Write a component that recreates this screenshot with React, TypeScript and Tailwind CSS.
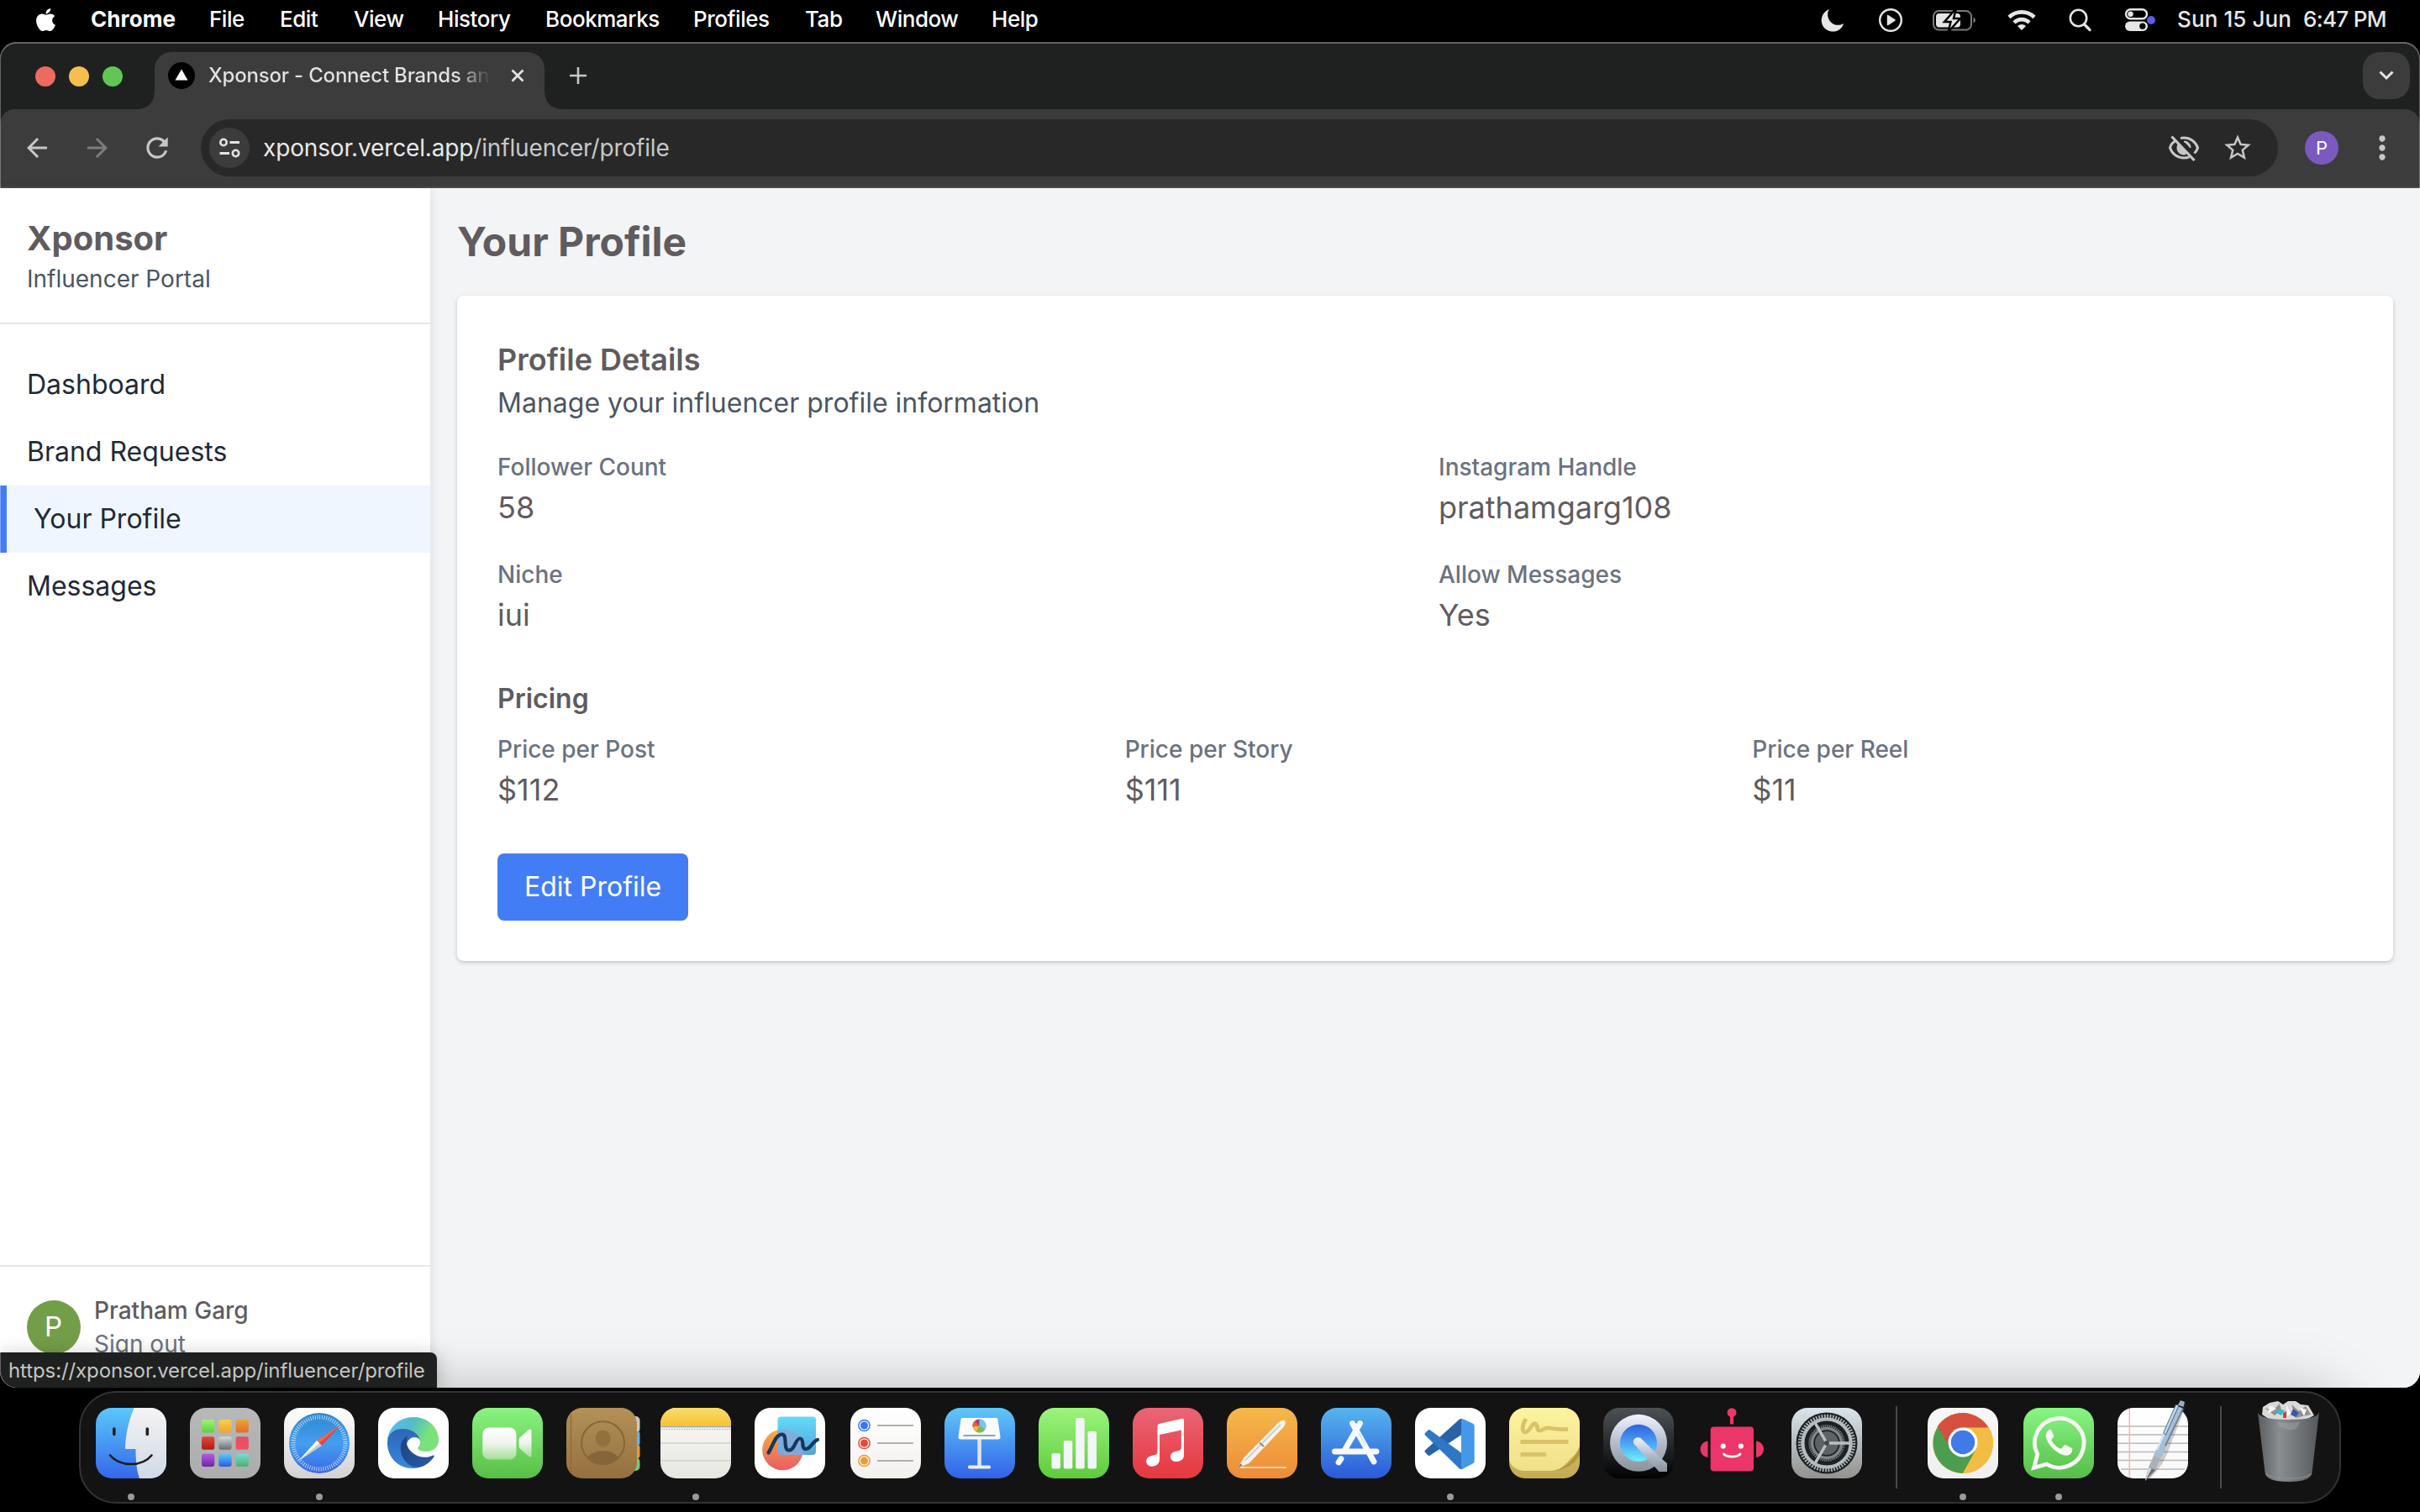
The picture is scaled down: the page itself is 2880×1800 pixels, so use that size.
import React from "react";
import { FaApple } from "react-icons/fa";
import { MdRefresh, MdStarBorder, MdMoreVert, MdArrowBack, MdArrowForward } from "react-icons/md";

/* ---------- Menu bar ---------- */

const menus: [string, string][] = [
  ["Chrome", "w-[141px] font-bold tracking-[0.1px]"],
  ["File", "w-[84px]"],
  ["Edit", "w-[88px]"],
  ["View", "w-[100px]"],
  ["History", "w-[128px]"],
  ["Bookmarks", "w-[176px]"],
  ["Profiles", "w-[133px]"],
  ["Tab", "w-[84px]"],
  ["Window", "w-[138px]"],
  ["Help", "w-[90px]"],
];

function StatusIcons() {
  return (
    <svg width="400" height="50" viewBox="2165 0 400 50" className="shrink-0">
      <path d="M2177 11c-12 5-12 20-2 25 8 4 17 0 19-8-7 4-14 1-17-4-3-6-2-10 0-13z" fill="#e6e6e6" />
      <circle cx="2250" cy="24" r="12.8" fill="none" stroke="#e6e6e6" strokeWidth="2.4" />
      <path d="M2246.500 18.500v11l8.500-5.500z" fill="#e6e6e6" stroke="#e6e6e6" strokeWidth="1.500" strokeLinejoin="round" />
      <rect x="2301" y="13" width="45" height="22.500" rx="6.500" fill="none" stroke="#7b7b7b" strokeWidth="2" />
      <path d="M2348.500 20.500q2.500 1 2.500 3.500t-2.500 3.500z" fill="#7b7b7b" />
      <rect x="2304" y="16" width="29" height="16.500" rx="4" fill="#e6e6e6" />
      <path d="M2328 10l-14 16h7.500l-3 12 14.500-16h-8z" fill="#e6e6e6" stroke="#000" strokeWidth="2.500" />
      <g fill="none" stroke="#e6e6e6" strokeWidth="4.600">
        <path d="M2391 20.500a21.500 21.500 0 0 1 30 0" />
        <path d="M2397 27a12.500 12.500 0 0 1 18 0" />
      </g>
      <path d="M2406 36l-5-5a7 7 0 0 1 10 0z" fill="#e6e6e6" />
      <circle cx="2473.500" cy="21.500" r="9.700" fill="none" stroke="#e6e6e6" strokeWidth="2.600" />
      <path d="M2480.500 29l6.500 6.500" stroke="#e6e6e6" strokeWidth="3.200" strokeLinecap="round" />
      <rect x="2530" y="11.200" width="25" height="11" rx="5.500" fill="none" stroke="#e6e6e6" strokeWidth="2.400" />
      <circle cx="2535.500" cy="16.700" r="3.200" fill="#e6e6e6" />
      <rect x="2529" y="25.500" width="27" height="11.500" rx="5.700" fill="#e6e6e6" />
      <circle cx="2549.800" cy="31.200" r="3.600" fill="#000" />
      <circle cx="2560" cy="24" r="4.900" fill="#5e5ce6" />
    </svg>
  );
}

function MenuBar() {
  return (
    <div className="flex h-[50px] shrink-0 items-center bg-black pl-[39px] text-[26px] leading-[46px] text-white">
      <FaApple className="mb-1 mr-[38px] size-[31px] shrink-0" />
      <div className="flex flex-1 pb-1 font-medium tracking-[-0.45px]">
        {menus.map(([label, cls]) => (
          <span key={label} className={`shrink-0 whitespace-nowrap ${cls}`}>
            {label}
          </span>
        ))}
      </div>
      <StatusIcons />
      <div className="flex w-[315px] gap-3.5 pb-1 pl-[26px] whitespace-nowrap font-medium text-[#e8e8e8]">
        <span className="tracking-[0.1px]">Sun 15 Jun</span>
        <span className="tracking-[-0.7px]">6:47 PM</span>
      </div>
    </div>
  );
}

/* ---------- Browser chrome ---------- */

function TabStrip() {
  return (
    <div className="flex h-[80px] items-start bg-[#1f2120] pl-[42px] pt-[12px]">
      <div className="flex h-[58px] w-[142px] items-center gap-4">
        <span className="size-6 rounded-full bg-[#ed6a5f]" />
        <span className="size-6 rounded-full bg-[#f5bf4f]" />
        <span className="size-6 rounded-full bg-[#62c655]" />
      </div>
      <div className="relative flex h-[68px] w-[464px] rounded-t-[20px] bg-[#3c3c3c] pl-[16px]">
        <svg className="absolute -left-[22px] bottom-0" width="22" height="22">
          <path d="M22 0v22H0C14 22 22 14 22 0z" fill="#3c3c3c" />
        </svg>
        <svg className="absolute -right-[22px] bottom-0" width="22" height="22">
          <path d="M0 0v22h22C8 22 0 14 0 0z" fill="#3c3c3c" />
        </svg>
        <div className="flex h-[56px] items-center">
          <svg width="32" height="32" viewBox="0 0 32 32">
            <circle cx="16" cy="16" r="16" fill="#000" />
            <path d="M16 8.500l7.500 13h-15z" fill="#fff" />
          </svg>
          <span className="ml-[16px] w-[336px] overflow-hidden whitespace-nowrap bg-linear-to-r from-[#e3e3e3] from-88% to-[#3c3c3c] to-100% bg-clip-text text-[24px] font-medium tracking-[-0.2px] text-transparent">
            Xponsor - Connect Brands an
          </span>
          <svg className="ml-[24px]" width="16" height="16" viewBox="0 0 16 16">
            <path d="M1.500 1.500l13 13M14.500 1.500l-13 13" stroke="#e3e3e3" strokeWidth="2.800" />
          </svg>
        </div>
      </div>
      <svg className="ml-[30px] mt-[18px]" width="20" height="20" viewBox="0 0 20 20">
        <path d="M10 0v20M0 10h20" stroke="#c7c7c7" strokeWidth="2.600" />
      </svg>
      <div className="ml-auto mr-[12px] flex h-[56px] w-[56px] items-center justify-center rounded-[20px] bg-[#3c3c3c]">
        <svg width="18" height="12" viewBox="0 0 18 12">
          <path d="M1.500 1.500L9 9l7.500-7.500" fill="none" stroke="#e3e3e3" strokeWidth="3" />
        </svg>
      </div>
    </div>
  );
}

function Toolbar() {
  return (
    <div className="bg-[#1f2120]">
      <div className="flex h-[94px] items-center rounded-t-[18px] border-b-2 border-[#4a4a4a] bg-[#3c3c3c] pl-[28px]">
        <MdArrowBack className="size-9 -ml-0.5 text-[#c7c7c7]" />
        <MdArrowForward className="ml-[36px] size-9 text-[#7d7d7d]" />
        <MdRefresh className="ml-[34px] size-[38px] text-[#c7c7c7]" />
        <div className="ml-[33px] flex h-[68px] w-[2472px] items-center rounded-full bg-[#282828] pl-[10px] pr-[29px]">
          <div className="flex size-12 items-center justify-center rounded-full bg-[#3c3c3c]">
            <svg width="28" height="28" viewBox="0 0 28 28" fill="none" stroke="#e3e3e3" strokeWidth="2.600">
              <circle cx="7" cy="7.500" r="3.700" />
              <path d="M14.500 7.500H26M2.500 20.500H14" strokeWidth="3" />
              <circle cx="21.500" cy="20.500" r="3.700" />
            </svg>
          </div>
          <div className="ml-[16px] flex-1 whitespace-nowrap text-[28px] tracking-[-0.15px] text-[#c7c7c7]">
            <span className="text-[#e8e8e8]">xponsor.vercel.app</span>/influencer/profile
          </div>
          <svg width="40" height="40" viewBox="0 0 40 40" fill="none" stroke="#c7c7c7">
            <path d="M10 11.500C6 14 4 17.500 3.500 20 6 27.500 12.500 32 20 32c2.500 0 4.500-.4 6.500-1.200M16 8.600c1.300-.4 2.700-.6 4-.6 7.500 0 14 4.500 16.500 12-.8 2.500-2 4.500-4 6.500" strokeWidth="3" />
            <path d="M20 12.500c4.500 0 7.500 3.200 7.500 7.500M13 17c-2 6 2 10.500 7 10.500z" strokeWidth="2" fill="#c7c7c7" />
            <path d="M15 15.500l10 11c-3 2-8 2-10.500-1-2.500-3-1.500-7 .5-10z" fill="#c7c7c7" stroke="none" />
            <path d="M5.500 6.500l27 28.500" strokeWidth="3.200" />
            <path d="M8 4.500l27 28.500" stroke="#282828" strokeWidth="2" />
          </svg>
          <MdStarBorder className="ml-[25px] size-[38px] text-[#c7c7c7]" />
        </div>
        <div className="ml-[32px] flex size-[40px] items-center justify-center rounded-full bg-[#7a5abf] text-[22px] text-white">
          P
        </div>
        <MdMoreVert className="ml-[30px] size-[44px] text-[#c7c7c7]" />
      </div>
    </div>
  );
}

/* ---------- Page ---------- */

const navItems = ["Dashboard", "Brand Requests", "Your Profile", "Messages"];

function Sidebar() {
  return (
    <aside className="relative z-10 flex w-[512px] shrink-0 flex-col bg-white shadow-[0_2px_12px_rgba(0,0,0,0.1)]">
      <div className="border-b-2 border-gray-200 p-8">
        <h1 className="text-[40px] leading-[56px] font-bold text-[#605b5f]">Xponsor</h1>
        <p className="text-[28px] leading-[40px] text-[#4b5563]">Influencer Portal</p>
      </div>
      <nav className="mt-8 flex-1">
        {navItems.map((item) => (
          <div
            key={item}
            className={
              item === "Your Profile"
                ? "flex h-20 items-center border-l-8 border-[#437df6] bg-[#eff6ff] px-8 text-[32px] text-[#1f2937]"
                : "flex h-20 items-center px-8 text-[32px] text-[#1f2937]"
            }
          >
            {item}
          </div>
        ))}
      </nav>
      <div className="flex items-center gap-4 border-t-2 border-gray-200 p-8">
        <div className="flex size-16 items-center justify-center rounded-full bg-[#739e48] pr-px text-[33px] text-white">P</div>
        <div className="text-[28px] leading-[40px]">
          <p className="font-medium text-[#605b5f]">Pratham Garg</p>
          <p className="text-[#6b7280]">Sign out</p>
        </div>
      </div>
    </aside>
  );
}

function Field({ label, value }: { label: string; value: string }) {
  return (
    <div>
      <p className="text-[28px] leading-[40px] font-medium text-[#6b7280]">{label}</p>
      <p className="text-[36px] leading-[56px] text-[#605b5f]">{value}</p>
    </div>
  );
}

function Main() {
  return (
    <main className="flex-1 bg-[#f3f4f6] p-8">
      <h2 className="mb-8 text-[48px] leading-[64px] font-bold text-[#605b5f]">Your Profile</h2>
      <section className="rounded-lg bg-white p-12 shadow-[0_2px_6px_rgba(0,0,0,0.1),0_2px_4px_rgba(0,0,0,0.1)]">
        <h3 className="text-[36px] leading-[56px] font-semibold text-[#605b5f]">Profile Details</h3>
        <p className="text-[32px] leading-[48px] text-[#4b5563]">Manage your influencer profile information</p>
        <div className="mt-8 grid grid-cols-2 gap-8">
          <Field label="Follower Count" value="58" />
          <Field label="Instagram Handle" value="prathamgarg108" />
          <Field label="Niche" value="iui" />
          <Field label="Allow Messages" value="Yes" />
        </div>
        <h4 className="mt-12 mb-4 text-[32px] leading-[48px] font-semibold text-[#605b5f]">Pricing</h4>
        <div className="grid grid-cols-3 gap-8">
          <Field label="Price per Post" value="$112" />
          <Field label="Price per Story" value="$111" />
          <Field label="Price per Reel" value="$11" />
        </div>
        <button className="mt-12 block h-20 rounded-lg bg-[#437df6] px-8 text-[32px] text-white">Edit Profile</button>
      </section>
    </main>
  );
}

/* ---------- Dock icons ---------- */

function Grad({ id, a, b, mid }: { id: string; a: string; b: string; mid?: string }) {
  return (
    <linearGradient id={id} x1="0" y1="0" x2="0" y2="1">
      <stop offset="0" stopColor={a} />
      {mid && <stop offset="0.5" stopColor={mid} />}
      <stop offset="1" stopColor={b} />
    </linearGradient>
  );
}

function Tile({ id, a, b, children }: { id: string; a: string; b: string; children?: React.ReactNode }) {
  return (
    <svg width="84" height="84" viewBox="0 0 84 84" className="overflow-visible">
      <defs>
        <Grad id={id} a={a} b={b} />
        <clipPath id={`${id}-clip`}>
          <rect width="84" height="84" rx="19" />
        </clipPath>
      </defs>
      <rect width="84" height="84" rx="19" fill={`url(#${id})`} />
      {children}
    </svg>
  );
}

const Finder = () => (
  <Tile id="finder" a="#5ac8fa" b="#3567eb">
    <defs>
      <Grad id="finder-face" a="#f4f2f4" b="#d0dae6" />
    </defs>
    <path d="M45.500 0C38 18 35.500 34 35 47.500q0 1.500 1.500 1.500h11c0 14 1 25 4.500 35H100V0z" fill="url(#finder-face)" clipPath="url(#finder-clip)" />
    <path d="M21.800 25v6.500M61.300 25v6.500" stroke="#222" strokeWidth="3.600" strokeLinecap="round" />
    <path d="M17 56.500c12 14 38 14 49.500 0" fill="none" stroke="#1b1b1b" strokeWidth="2.600" strokeLinecap="round" />
  </Tile>
);

const padColors: [string, string][] = [
  ["#9df573", "#5cd03f"], ["#f8d24a", "#f0a32f"], ["#f0a236", "#dc6f2c"],
  ["#ea4639", "#a91d14"], ["#d3dbe0", "#6a6d70"], ["#e94a68", "#ec5560"],
  ["#b65ee8", "#6a27a4"], ["#58ccf9", "#2a5be8"], ["#7bdcd5", "#4bb073"],
];

const Launchpad = () => (
  <Tile id="pad" a="#b7b8b9" b="#acacac">
    <defs>
      {padColors.map(([a, b], i) => (
        <Grad key={i} id={`pad${i}`} a={a} b={b} />
      ))}
    </defs>
    {padColors.map((_, i) => (
      <rect key={i} x={14 + (i % 3) * 20.3} y={14 + Math.floor(i / 3) * 20.2} width="15.300" height="15.500" rx="2.800" fill={`url(#pad${i})`} />
    ))}
  </Tile>
);

const Safari = () => (
  <Tile id="safari" a="#ffffff" b="#d2d2d2">
    <defs>
      <Grad id="safari-dial" a="#2e87cd" mid="#459ef0" b="#3969e6" />
    </defs>
    <circle cx="42" cy="42" r="36" fill="url(#safari-dial)" />
    <circle cx="42" cy="42" r="31" fill="none" stroke="#dcecff" strokeWidth="5" strokeDasharray="0.900 1.805" opacity="0.85" />
    <path d="M67.500 20L45 45l-6-6z" fill="#e0483c" />
    <path d="M67.500 20L42 42l-3-3z" fill="#ef6a5c" />
    <path d="M17 63.500L39 39l6 6z" fill="#c9ccd0" />
    <path d="M17 63.500L39 39l3 3z" fill="#fff" />
  </Tile>
);

const Edge = () => (
  <Tile id="edge" a="#ffffff" b="#ffffff">
    <defs>
      <linearGradient id="edge-top" x1="0" y1="0" x2="1" y2="0.400">
        <stop offset="0.150" stopColor="#5cb8ee" />
        <stop offset="0.500" stopColor="#53bbc4" />
        <stop offset="0.850" stopColor="#7be27a" />
      </linearGradient>
      <Grad id="edge-mid" a="#2a68b5" b="#3a86dc" />
      <linearGradient id="edge-low" x1="0" y1="0" x2="1" y2="1">
        <stop offset="0" stopColor="#1d427f" />
        <stop offset="1" stopColor="#2a5ba8" />
      </linearGradient>
    </defs>
    <path d="M11 40C12 23 25 11 42 11c18 0 30 13 30 27 0 9-6 14-15 14-6 0-11-2-9.500-5 2-2 2.500-4 2.500-6-1-9-10-15-21-15-9 0-16 6-18 14z" fill="url(#edge-top)" />
    <path d="M11 42c0-11 8-17 18-17 11 0 19 6 21 13-5-6-15-3-16 6-1 12 8 20 16 26.500-3 1-6 1.500-9 1.500C24 72 11 59 11 42z" fill="url(#edge-mid)" />
    <path d="M35 33.500C26 38 25 50 29 58c4 9 12 14 21 12.500 8-2 14-8 16.500-12.500.6-1.400-.4-2-1.500-1.200-7 3.200-15 2.700-22-1.800-8-5.500-11-12.500-8-21.500z" fill="url(#edge-low)" />
  </Tile>
);

const FaceTime = () => (
  <Tile id="ft" a="#89f380" b="#58bf45">
    <defs>
      <Grad id="ft-cam" a="#ffffff" mid="#eef5ec" b="#a4dd98" />
    </defs>
    <rect x="12.200" y="23.500" width="40.300" height="38" rx="8" fill="url(#ft-cam)" />
    <path d="M55.500 39c0-2 .6-3 2-4.200l9.500-8.500c2-1.500 3.500-1 3.500 1.200v29c0 2.200-1.500 2.700-3.500 1.200l-9.500-8.500c-1.400-1.200-2-2.200-2-4.200z" fill="url(#ft-cam)" />
  </Tile>
);

const Contacts = () => (
  <svg width="84" height="84" viewBox="0 0 84 84" className="overflow-visible">
    <defs>
      <Grad id="ct" a="#b39158" b="#95703f" />
    </defs>
    <rect x="70" y="10" width="17.500" height="20" rx="5" fill="#c9c9c9" />
    <rect x="70" y="28" width="17.500" height="17" rx="3" fill="#5db5ef" />
    <rect x="70" y="44" width="17.500" height="16" rx="3" fill="#f0953a" />
    <rect x="70" y="59" width="17.500" height="16" rx="5" fill="#69d267" />
    <rect width="84" height="84" rx="19" fill="url(#ct)" />
    <path d="M5.500 7v70" stroke="#8a6a3b" strokeWidth="1.200" />
    <circle cx="43.600" cy="41.700" r="25.500" fill="none" stroke="#876738" strokeWidth="2" />
    <ellipse cx="43.600" cy="36.500" rx="9" ry="10" fill="#92713f" />
    <path d="M25.500 59.500c5-11 31-11 36 0a25.500 25.500 0 0 1-36 0z" fill="#86653a" />
  </svg>
);

const Notes = () => (
  <Tile id="notes" a="#fbfaf8" b="#e6e6e0">
    <defs>
      <Grad id="notes-top" a="#fbdc6a" b="#f5c335" />
    </defs>
    <g clipPath="url(#notes-clip)">
      <rect width="84" height="21.500" fill="url(#notes-top)" />
      <rect y="21.500" width="84" height="1.800" fill="#a9a8a6" />
      <path d="M1 25.500h83" stroke="#b5b4b1" strokeWidth="1.400" strokeDasharray="1.400 1.600" />
      <path d="M0 42h84M0 63h84" stroke="#d0d0cf" strokeWidth="1.600" />
    </g>
  </Tile>
);

const Freeform = () => (
  <Tile id="ff" a="#ffffff" b="#ffffff">
    <defs>
      <Grad id="ff-c" a="#f2b33d" mid="#ee8452" b="#ea5d68" />
      <Grad id="ff-s" a="#62dbf9" b="#55a4d8" />
    </defs>
    <circle cx="33.500" cy="50" r="24.300" fill="url(#ff-c)" />
    <rect x="27.500" y="10.500" width="45.500" height="45.500" rx="4" fill="url(#ff-s)" />
    <path d="M27.500 26.500a24.300 24.300 0 0 1 30.300 29.500H31.500q-4 0-4-4z" fill="#8aa9dc" opacity="0.800" />
    <path d="M16.500 53.500C22 45 25 31.500 32.500 31.500 40 31.500 33 50.500 41 50.500c7 0 7.500-14 13-14 6 0 .5 12.500 7 12.500 5.500 0 8-9 14-11" fill="none" stroke="#16375c" strokeWidth="4.200" strokeLinecap="round" />
  </Tile>
);

const Reminders = () => (
  <Tile id="rem" a="#ffffff" b="#f3f1ee">
    {["#3478f6", "#e5493a", "#ec9a35"].map((c, i) => (
      <g key={c}>
        <circle cx="16.500" cy={21 + i * 21} r="6.600" fill="none" stroke={c} strokeWidth="1.500" />
        <circle cx="16.500" cy={21 + i * 21} r="4.500" fill={c} />
        <path d={`M32 ${21 + i * 21}h43`} stroke="#b0b0b2" strokeWidth="1.800" />
      </g>
    ))}
  </Tile>
);

const Keynote = () => (
  <Tile id="key" a="#60c7f8" b="#3162e8">
    <rect x="39.300" y="36" width="4.600" height="34" fill="#dfe3ea" />
    <rect x="28" y="68.500" width="27" height="4" rx="1.800" fill="#eceef2" />
    <path d="M21.500 12h40q1.800 0 2 2l3 20.500q.3 3-2.500 3H19q-2.800 0-2.500-3l3-20.500q.2-2 2-2z" fill="#fafbfd" />
    <path d="M22.500 33h38" stroke="#8fa3bd" strokeWidth="2.200" />
    <circle cx="41.500" cy="21.500" r="8" fill="#f4b93f" />
    <path d="M41.500 21.500v-8a8 8 0 0 1 7 12z" fill="#6cc8f4" />
    <path d="M41.500 21.500l7 4a8 8 0 0 1-11 3z" fill="#79bf4f" />
    <path d="M41.500 21.500l-8 1a8 8 0 0 1 8-9z" fill="#b03a75" />
    <path d="M41.500 21.500l-8 .5a8 8 0 0 1 2-6z" fill="#e8604a" />
  </Tile>
);

const Numbers = () => (
  <Tile id="num" a="#9cf47c" b="#5dcc3c">
    <g fill="#f3f5f6">
      <rect x="15.500" y="54" width="10.500" height="18.500" rx="2" />
      <rect x="29.800" y="39" width="10.500" height="33.500" rx="2" />
      <rect x="44.200" y="12" width="10.500" height="60.500" rx="2" />
      <rect x="58.500" y="28" width="10.500" height="44.500" rx="2" />
    </g>
  </Tile>
);

const Music = () => (
  <Tile id="mus" a="#ea6576" b="#e6373f">
    <path d="M29.500 21.500q0-2 2-2.500L59 12.800q2-.4 2 1.500v42c0 5-4 7.700-9 7.700-4 0-7-2-7-5.800 0-4.200 3.500-6 7.500-6.700 3.500-.7 5.300-1.500 5.300-4V26.500L32 32v28.500c0 6-3.700 9.200-9 9.200-4 0-6.800-2.200-6.800-6s3-6 7-6.900c4.300-.9 6.300-1.500 6.300-4.300z" fill="#fff" />
  </Tile>
);

const Pages = () => (
  <Tile id="pages" a="#f5b84a" b="#ee8b39">
    <path d="M16 71h55" stroke="#fbd3a0" strokeWidth="2.200" />
    <path d="M13.500 71.500L20 59.500 62 17q5-3.500 7-1.500t-1.500 7.500L26.500 66z" fill="#f4f2f0" />
    <path d="M22 62.500L64 20" stroke="#c9c4c0" strokeWidth="1.400" />
    <path d="M39 41.500l5 4.500" stroke="#8f8a86" strokeWidth="2" />
    <path d="M13.500 71.500l3-5 2 2z" fill="#6f6a68" />
  </Tile>
);

const AppStore = () => (
  <Tile id="aps" a="#55b6ee" b="#2c59d8">
    <g stroke="#f7f9fc" strokeWidth="6.800" strokeLinecap="round">
      <path d="M16.500 52h49.500M24 60.500l-3 4.500M37.500 18.500L63 64M46.500 18.500L28.500 50" />
    </g>
    <path d="M45 30l8 15" stroke="#c8dcf5" strokeWidth="1.200" />
  </Tile>
);

const VSCode = () => (
  <Tile id="vsc" a="#ffffff" b="#ffffff">
    <path d="M53 13.500q1.500-1 4 0v17.500L18 56.500q-1.200 1-2.400 0l-3.600-3.400q-1.200-1.400 0-2.600z" fill="#2863a8" />
    <path d="M12 32.500q-1.200-1.400 0-2.600l3.600-3.400q1.200-1 2.400 0L57 55v17.500q-2.500 1-4 0z" fill="#2f77c6" />
    <path d="M55 13q1-.4 2 .2l12 5.600q1.700 1 1.700 3v41.500q0 2-1.700 3L57 72.400q-1 .6-2 .2z" fill="#4598e8" />
  </Tile>
);

const Stickies = () => (
  <Tile id="stk" a="#d9c66a" b="#c4ab53">
    <defs>
      <Grad id="stk-p" a="#fdf3a0" b="#f0e08a" />
    </defs>
    <path d="M0 60V19A19 19 0 0 1 19 0h46a19 19 0 0 1 19 19v26c-2 9-8 12-14 19-6 6-10 11-20 11H19C8 75 0 68 0 60z" fill="url(#stk-p)" />
    <path d="M84 46c-6 15-18 28-34 29 14 0 30-8 34-20z" fill="#a58a3a" opacity="0.700" />
    <g fill="none" stroke="#d9c368" strokeWidth="4.800">
      <path d="M20 13c-5 8-5 16-1 16 6 0 8-12 12-10s1 9 6 8 5-4 11-3 8 2 22 1.500M13.500 40.500h57M13.500 55.500H44" />
    </g>
  </Tile>
);

const QuickTime = () => (
  <Tile id="qt" a="#4d5156" b="#020203">
    <defs>
      <Grad id="qt-ring" a="#f0f4ff" mid="#b4bccb" b="#8b929b" />
      <Grad id="qt-in" a="#2f62e0" mid="#4ba1f4" b="#6df0fb" />
    </defs>
    <circle cx="42" cy="41.800" r="34" fill="url(#qt-ring)" />
    <circle cx="42" cy="41.800" r="22" fill="url(#qt-in)" />
    <path d="M37 43.500c-3.500-4 1-10.500 7.500-7.500L70.500 61.500 76 66v10h-9.500z" fill="url(#qt-ring)" />
  </Tile>
);

const Robot = () => (
  <svg width="84" height="84" viewBox="0 0 84 84" className="overflow-visible">
    <g fill="#ec3568">
      <circle cx="42" cy="5.700" r="5.500" />
      <rect x="40" y="8" width="4" height="11.500" />
      <rect x="16.700" y="22.500" width="51.300" height="53" rx="4" />
      <path d="M13.500 39.500C1.500 41 1.500 57.500 13.500 59zM71 39.500c12 1.500 12 18 0 19.500z" />
    </g>
    <circle cx="31.700" cy="45.500" r="3.100" fill="#fff" />
    <circle cx="52.800" cy="45.500" r="3.100" fill="#fff" />
    <path d="M32.500 55c4 4.200 15.500 4.200 19.500 0" fill="none" stroke="#fff" strokeWidth="2.800" strokeLinecap="round" />
  </svg>
);

const Settings = () => (
  <Tile id="set" a="#d9e5ec" b="#93928f">
    <circle cx="42" cy="42" r="36.500" fill="#1c2224" />
    <circle cx="42" cy="42" r="32" fill="none" stroke="#aab2b6" strokeWidth="4.500" strokeDasharray="1.800 1.550" />
    <circle cx="42" cy="42" r="28.500" fill="none" stroke="#b4bcc0" strokeWidth="4" />
    <circle cx="42" cy="42" r="20.500" fill="none" stroke="#7f8688" strokeWidth="2.500" strokeDasharray="1.300 1.100" />
    <circle cx="42" cy="42" r="17.500" fill="none" stroke="#7f8688" strokeWidth="3.500" />
    <circle cx="42" cy="42" r="14" fill="#5d6263" />
    <path d="M42 42h27M42 42L28.500 18.600M42 42L28.500 65.400" stroke="#b9c1c5" strokeWidth="3.400" />
    <circle cx="42" cy="42" r="3" fill="#454b4d" />
  </Tile>
);

const Chrome = () => (
  <Tile id="chr" a="#f7f7f7" b="#efefef">
    <circle cx="42" cy="42" r="36" fill="#f2bd42" />
    <path d="M42 42L11.500 22.500a36 36 0 0 1 61 1z" fill="#d5503f" />
    <path d="M12 23a36 36 0 0 0 30 55l15.500-27.500L42 42z" fill="#4d9d51" />
    <path d="M12 23l15 27.500 15-8.500z" fill="#4d9d51" />
    <path d="M12 22.500L26 46l16-4V23.500z" fill="#d5503f" />
    <path d="M42 23.500h31a36 36 0 0 1-31 54.500L57 50.500z" fill="#f2bd42" />
    <circle cx="42" cy="41" r="17.500" fill="#fff" />
    <circle cx="42" cy="41" r="14.200" fill="#4079e8" />
  </Tile>
);

const WhatsApp = () => (
  <Tile id="wa" a="#88f583" b="#57bd48">
    <path d="M12.500 71.200l4.300-15.800a29.300 29.300 0 1 1 11 11.600z" fill="none" stroke="#f6f6f4" strokeWidth="4.800" />
    <path
      transform="translate(21 20) scale(1.780)"
      d="M6.200 3.200c-1.600.4-3.200 2.300-2.900 4.600.3 3 3.200 7.600 7.500 10.500 2.700 1.800 6 3.200 8.300 1.800 1.500-.9 2-2.700 1.800-4.200l-4.400-2.300c-.6-.2-1 .1-1.300.5l-1.300 1.600c-.4.400-.8.400-1.300.2-2.300-1-4.300-2.900-5.500-5.100-.2-.5-.1-.8.200-1.200l1-1.300c.2-.4.3-.7.100-1.100L7 3.800c-.2-.5-.4-.6-.8-.6z"
      fill="#f6f6f4"
    />
  </Tile>
);

const TextEdit = () => (
  <Tile id="te" a="#ffffff" b="#f8f8f8">
    <path d="M0 22h84M0 32h84M0 42.300h84M0 52.500h84M0 62.500h84M4 73h76" stroke="#b9b9b9" strokeWidth="1.400" />
    <path d="M14.300 1v82" stroke="#f4b6b6" strokeWidth="1.500" />
    <path d="M36 85l10-24 3-8L73-4l3-5 5 2v5L59 55l-6 12-15 18z" fill="#444" opacity="0.250" />
    <path d="M33 87l4-16L46 50l8 3.500-8.500 19z" fill="#a9b0b8" />
    <path d="M33 87l4-16 8.500 3z" fill="#6d727a" />
    <path d="M33 87l4-16 3.500 1.400z" fill="#d8dde3" />
    <path d="M43 57L69.500-3l8 3.500-25.500 60z" fill="#a6c0d8" />
    <path d="M47 50L70-1" stroke="#d6e6f4" strokeWidth="2" />
    <path d="M57 45L78 1" stroke="#6d8194" strokeWidth="1.800" />
    <path d="M54.500 30L69.500-4l3.500 1.200L57.500 32z" fill="#bad8f3" stroke="#3d4c5c" strokeWidth="0.800" />
    <path d="M72-3.500L75-9l5 2-1.500 6z" fill="#8fb0cf" />
  </Tile>
);

const Trash = () => (
  <svg width="84" height="84" viewBox="0 0 84 84" className="overflow-visible">
    <defs>
      <linearGradient id="bin" x1="0" y1="0" x2="1" y2="0">
        <stop offset="0" stopColor="#5a5e61" />
        <stop offset="0.350" stopColor="#8a8d90" />
        <stop offset="0.700" stopColor="#6f7376" />
        <stop offset="1" stopColor="#54585b" />
      </linearGradient>
    </defs>
    <path d="M11 8l1-9 8-5 10-2 6 4 6-4 9 0 6 4 9 1 7 12-15 8H25z" fill="#d9d9d9" />
    <path d="M14 0l10 3 8-8 2 8-8 6zM46-4l9 8 8-6 6 10-18 4z" fill="#8f9092" />
    <path d="M29 1l9 2-4 6-6-3z" fill="#3bb9c9" />
    <path d="M48 1l7 5-4 5-6-3z" fill="#3a55a8" />
    <path d="M36 6l4-2v8h-4z" fill="#c04a35" />
    <path d="M20-3l8 4-10 6zM56 0l8 2-3 8zM40-5l5 12-4 3z" fill="#f6f6f6" />
    <path d="M6 5q2 9 36.500 9T79 5l-8.500 72q-1.500 11-28 11t-28-11z" fill="url(#bin)" />
    <path d="M30 16q14 4 26 0-2 12-14 10T30 16z" fill="#a3a6a8" opacity="0.450" />
    <path d="M15 78q6 6 27.500 6T70 78" fill="none" stroke="#8d9194" strokeWidth="1.400" opacity="0.700" />
  </svg>
);

function DockItem({ icon: Icon, running, cls }: { icon: React.FC; running?: boolean; cls?: string }) {
  return (
    <div className={`flex w-[84px] shrink-0 flex-col items-center ${cls ?? ""}`}>
      <Icon />
      <span className={running ? "mt-[18px] size-2 rounded-full bg-[#9a9a9a]" : "mt-[18px] size-2"} />
    </div>
  );
}

function Dock() {
  return (
    <div className="ml-[94px] mt-[4px] flex h-[134px] w-[2692px] items-start rounded-[44px] border-2 border-[#333] bg-[#131313] pl-[18px] pt-[18px] shadow-[0_0_70px_rgba(0,0,0,0.26)]">
      <div className="flex gap-7">
        <DockItem icon={Finder} running />
        <DockItem icon={Launchpad} />
        <DockItem icon={Safari} running />
        <DockItem icon={Edge} />
        <DockItem icon={FaceTime} />
        <DockItem icon={Contacts} />
        <DockItem icon={Notes} running />
        <DockItem icon={Freeform} />
        <DockItem icon={Reminders} cls="ml-[2px]" />
        <DockItem icon={Keynote} />
        <DockItem icon={Numbers} />
        <DockItem icon={Music} />
        <DockItem icon={Pages} />
        <DockItem icon={AppStore} />
        <DockItem icon={VSCode} running />
        <DockItem icon={Stickies} />
        <DockItem icon={QuickTime} />
        <DockItem icon={Robot} cls="-ml-px mr-px" />
        <DockItem icon={Settings} />
      </div>
      <span className="-mt-[2px] ml-[40px] h-[98px] w-[2px] bg-[#4a4a4a]" />
      <DockItem icon={Chrome} running cls="ml-[36px]" />
      <DockItem icon={WhatsApp} running cls="ml-[30px]" />
      <DockItem icon={TextEdit} cls="ml-[28px]" />
      <span className="-mt-[2px] ml-[38px] h-[98px] w-[2px] bg-[#4a4a4a]" />
      <DockItem icon={Trash} cls="ml-[37px]" />
    </div>
  );
}

export default function App() {
  return (
    <div className="flex h-[1800px] w-[2880px] flex-col overflow-hidden bg-black font-['Inter',sans-serif]">
      <MenuBar />
      <div className="relative flex h-[1602px] shrink-0 flex-col overflow-hidden rounded-[20px] bg-[#f3f4f6]">
        <TabStrip />
        <Toolbar />
        <div className="flex min-h-0 flex-1">
          <Sidebar />
          <Main />
        </div>
        <div className="absolute bottom-0 left-0 z-20 flex h-[42px] w-[520px] items-center rounded-tr-lg bg-[#1f2120] pt-[2px] pl-[10px] text-[24px] tracking-[-0.1px] whitespace-nowrap text-[#c4c4c4] shadow-[0_4px_24px_rgba(0,0,0,0.25)]">
          https://xponsor.vercel.app/influencer/profile
        </div>
        <div className="pointer-events-none absolute inset-0 z-30 rounded-[20px] border-x border-t-2 border-white/30" />
      </div>
      <div className="relative">
        <Dock />
      </div>
    </div>
  );
}
